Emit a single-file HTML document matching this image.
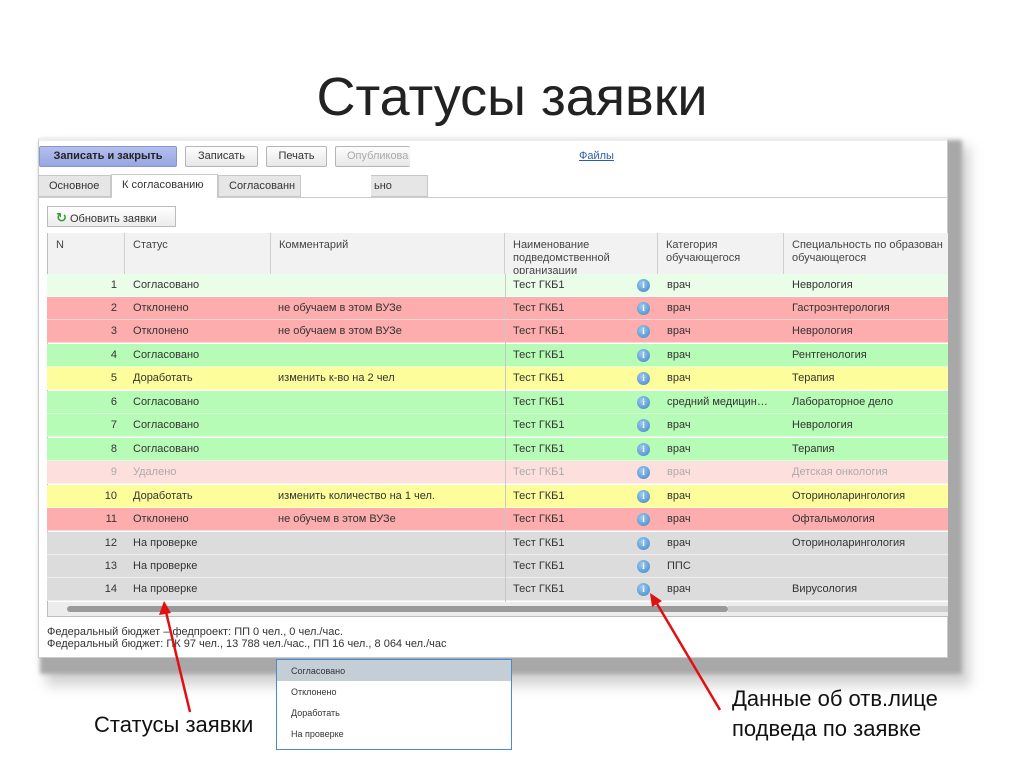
<!DOCTYPE html>
<html><head><meta charset="utf-8"><style>
*{margin:0;padding:0;box-sizing:border-box}
body{width:1024px;height:767px;background:#fff;position:relative;overflow:hidden;font-family:"Liberation Sans","DejaVu Sans",sans-serif}
.abs{position:absolute}
.t{font-size:11px;color:#333;white-space:nowrap}
.btn{position:absolute;top:146px;height:21px;border:1px solid #b5b5b5;background:linear-gradient(#fdfdfd,#e8e8e8);font-size:11px;line-height:19px;text-align:center;color:#333;border-radius:2px}
.row{position:absolute;left:47px;width:901px;height:23px;font-size:11px;color:#333;border-bottom:1px solid rgba(255,255,255,.5)}
.row span{position:absolute;top:5px;white-space:nowrap}
.n{right:auto;width:70px;left:0;text-align:right}
.s{left:86px}.c{left:231px}.o{left:466px}.k{left:620px}.sp{left:745px}
.i{left:590px;top:5px!important;width:13px;height:13px;border-radius:50%;background:radial-gradient(circle at 40% 35%,#9ccaf0,#3d85c8);color:#fff;font-size:9px;font-weight:bold;text-align:center;line-height:13px;font-family:"Liberation Serif",serif}
.g1{background:#e9fde9}.r{background:#fdadad}.g{background:#b6fbb6}.y{background:#fdfd9c}.p{background:#fde0de;color:#aaa}.gr{background:#dcdcdc}
.hd{position:absolute;top:233px;height:41px;background:#f2f2f2;border-right:1px solid #d0d0d0;font-size:11px;color:#444;padding:6px 0 0 8px;line-height:13px;overflow:hidden}
</style></head><body>
<div class="abs" style="left:0;top:66px;width:1024px;text-align:center;font-size:54px;color:#222">Статусы заявки</div>

<!-- shadow -->
<div class="abs" style="left:46px;top:146px;width:924px;height:540px;background:#d4d4d4;filter:blur(6px)"></div>
<div class="abs" style="left:40px;top:140px;width:922px;height:534px;background:#a8a8a8;filter:blur(2px)"></div>
<div class="abs" style="left:38px;top:138px;width:910px;height:520px;background:#fff;border:1px solid #ccc;border-top:3px solid #eee"></div>

<div class="btn" style="left:39px;width:138px;background:linear-gradient(#b4bff0,#98a6e0);border-color:#8a96c8;font-weight:bold;color:#222">Записать и закрыть</div>
<div class="btn" style="left:185px;width:73px">Записать</div>
<div class="btn" style="left:266px;width:61px">Печать</div>
<div class="btn" style="left:335px;width:75px;color:#aaa;border-right:none;text-align:left;padding-left:11px">Опубликова</div>
<div class="abs t" style="left:579px;top:150px;color:#2a5db0;text-decoration:underline">Файлы</div>

<div class="abs" style="left:38px;top:197px;width:910px;height:1px;background:#ccc"></div>
<div class="abs t" style="left:38px;top:175px;width:73px;height:22px;background:#e6e6e6;border:1px solid #c8c8c8;padding:4px 0 0 10px">Основное</div>
<div class="abs t" style="left:111px;top:174px;width:107px;height:24px;background:#fff;border:1px solid #c8c8c8;border-bottom:none;padding:4px 0 0 10px">К согласованию</div>
<div class="abs t" style="left:218px;top:175px;width:83px;height:22px;background:#e6e6e6;border:1px solid #c8c8c8;padding:4px 0 0 10px;overflow:hidden">Согласованн</div>
<div class="abs t" style="left:301px;top:175px;width:70px;height:22px;background:#fff"></div>
<div class="abs t" style="left:371px;top:175px;width:57px;height:22px;background:#e6e6e6;border:1px solid #c8c8c8;border-left:none;padding:4px 0 0 3px">ьно</div>

<div class="abs t" style="left:47px;top:206px;width:129px;height:21px;border:1px solid #bbb;background:linear-gradient(#fff,#ececec);padding:3px 0 0 8px"><span style="color:#3a9a3a;font-weight:bold;font-size:13px">&#8635;</span> Обновить заявки</div>

<div class="abs" style="left:47px;top:233px;width:901px;height:384px;border:1px solid #bdbdbd;border-right:none;background:#fff"></div>
<div class="hd" style="left:48px;width:77px">N</div>
<div class="hd" style="left:125px;width:146px">Статус</div>
<div class="hd" style="left:271px;width:234px">Комментарий</div>
<div class="hd" style="left:505px;width:153px">Наименование<br>подведомственной<br>организации</div>
<div class="hd" style="left:658px;width:126px">Категория<br>обучающегося</div>
<div class="hd" style="left:784px;width:164px;border-right:none">Специальность по образован<br>обучающегося</div>

<div class="row g1" style="top:274px"><span class="n">1</span><span class="s">Согласовано</span><span class="o">Тест ГКБ1</span><span class="i">i</span><span class="k">врач</span><span class="sp">Неврология</span></div>
<div class="row r" style="top:297px"><span class="n">2</span><span class="s">Отклонено</span><span class="c">не обучаем в этом ВУЗе</span><span class="o">Тест ГКБ1</span><span class="i">i</span><span class="k">врач</span><span class="sp">Гастроэнтерология</span></div>
<div class="row r" style="top:320px"><span class="n">3</span><span class="s">Отклонено</span><span class="c">не обучаем в этом ВУЗе</span><span class="o">Тест ГКБ1</span><span class="i">i</span><span class="k">врач</span><span class="sp">Неврология</span></div>
<div class="row g" style="top:344px"><span class="n">4</span><span class="s">Согласовано</span><span class="o">Тест ГКБ1</span><span class="i">i</span><span class="k">врач</span><span class="sp">Рентгенология</span></div>
<div class="row y" style="top:367px"><span class="n">5</span><span class="s">Доработать</span><span class="c">изменить к-во на 2 чел</span><span class="o">Тест ГКБ1</span><span class="i">i</span><span class="k">врач</span><span class="sp">Терапия</span></div>
<div class="row g" style="top:391px"><span class="n">6</span><span class="s">Согласовано</span><span class="o">Тест ГКБ1</span><span class="i">i</span><span class="k">средний медицин…</span><span class="sp">Лабораторное дело</span></div>
<div class="row g" style="top:414px"><span class="n">7</span><span class="s">Согласовано</span><span class="o">Тест ГКБ1</span><span class="i">i</span><span class="k">врач</span><span class="sp">Неврология</span></div>
<div class="row g" style="top:438px"><span class="n">8</span><span class="s">Согласовано</span><span class="o">Тест ГКБ1</span><span class="i">i</span><span class="k">врач</span><span class="sp">Терапия</span></div>
<div class="row p" style="top:461px"><span class="n">9</span><span class="s">Удалено</span><span class="o">Тест ГКБ1</span><span class="i">i</span><span class="k">врач</span><span class="sp">Детская онкология</span></div>
<div class="row y" style="top:485px"><span class="n">10</span><span class="s">Доработать</span><span class="c">изменить количество на 1 чел.</span><span class="o">Тест ГКБ1</span><span class="i">i</span><span class="k">врач</span><span class="sp">Оториноларингология</span></div>
<div class="row r" style="top:508px"><span class="n">11</span><span class="s">Отклонено</span><span class="c">не обучем в этом ВУЗе</span><span class="o">Тест ГКБ1</span><span class="i">i</span><span class="k">врач</span><span class="sp">Офтальмология</span></div>
<div class="row gr" style="top:532px"><span class="n">12</span><span class="s">На проверке</span><span class="o">Тест ГКБ1</span><span class="i">i</span><span class="k">врач</span><span class="sp">Оториноларингология</span></div>
<div class="row gr" style="top:555px"><span class="n">13</span><span class="s">На проверке</span><span class="o">Тест ГКБ1</span><span class="i">i</span><span class="k">ППС</span></div>
<div class="row gr" style="top:578px"><span class="n">14</span><span class="s">На проверке</span><span class="o">Тест ГКБ1</span><span class="i">i</span><span class="k">врач</span><span class="sp">Вирусология</span></div>
<div class="abs" style="left:505px;top:274px;width:1px;height:328px;background:#c8c8c8"></div>

<div class="abs" style="left:48px;top:602px;width:900px;height:14px;background:#ececec"></div>
<div class="abs" style="left:67px;top:606px;width:661px;height:6px;border-radius:3px;background:#9a9a9a"></div>
<div class="abs" style="left:728px;top:606px;width:220px;height:6px;background:#cfcfcf"></div>

<div class="abs t" style="left:47px;top:626px;font-size:11px;color:#333">Федеральный бюджет – федпроект: ПП 0 чел., 0 чел./час.</div>
<div class="abs t" style="left:47px;top:638px;font-size:11px;color:#333">Федеральный бюджет: ПК 97 чел., 13 788 чел./час., ПП 16 чел., 8 064 чел./час</div>

<div class="abs" style="left:276px;top:659px;width:236px;height:91px;border:1px solid #4a8ad0;background:#fff;font-size:9px;color:#333">
<div style="height:21px;background:#c4ced6;padding:6px 0 0 14px">Согласовано</div>
<div style="height:21px;padding:6px 0 0 14px">Отклонено</div>
<div style="height:21px;padding:6px 0 0 14px">Доработать</div>
<div style="height:21px;padding:6px 0 0 14px">На проверке</div>
</div>

<div class="abs" style="left:94px;top:712px;font-size:22px;color:#111">Статусы заявки</div>
<div class="abs" style="left:732px;top:684px;font-size:22px;color:#111;line-height:30px">Данные об отв.лице<br>подведа по заявке</div>

<svg class="abs" style="left:0;top:0" width="1024" height="767">
<g stroke="#e01010" stroke-width="2.5" fill="#e01010">
<line x1="190" y1="712" x2="166" y2="612"/>
<polygon points="164,601 159,615 171,613" stroke="none"/>
<line x1="720" y1="710" x2="656" y2="602"/>
<polygon points="650,593 652,607 662,601" stroke="none"/>
</g></svg>
</body></html>
